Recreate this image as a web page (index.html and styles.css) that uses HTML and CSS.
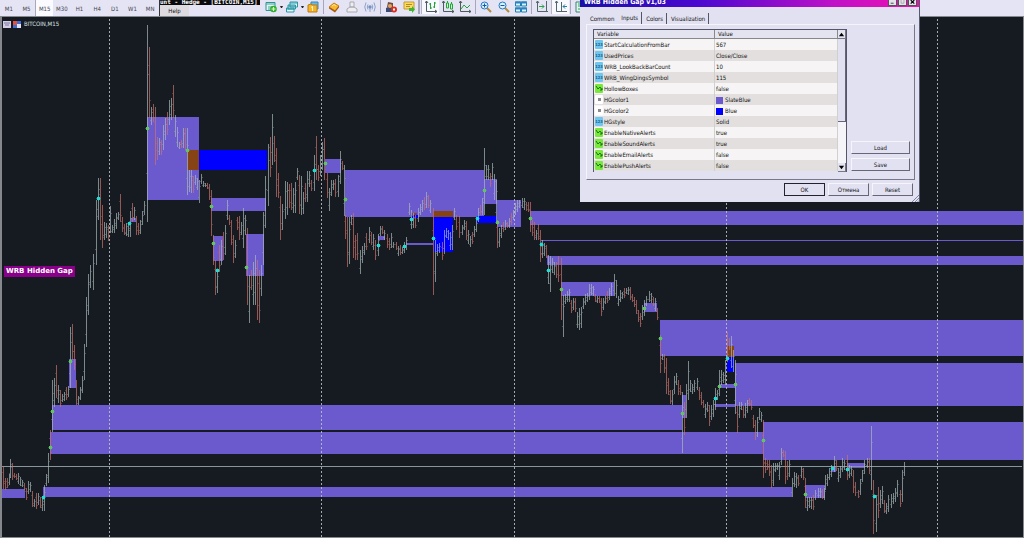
FILE: index.html
```html
<!DOCTYPE html>
<html lang="en">
<head>
<meta charset="utf-8">
<meta name="viewport" content="width=device-width, initial-scale=1">
<title>BITCOIN,M15</title>
<link rel="stylesheet" href="styles.css">
</head>
<body>
<div class="terminal">
  <header class="topbar">
    <nav class="frames" aria-label="Timeframes">
      <button>M1</button><button>M5</button><button class="active">M15</button><button>M30</button><button>H1</button><button>H4</button><button>D1</button><button>W1</button><button>MN</button>
    </nav>
    <div class="menu">
      <div class="caption"><span>unt - Hedge - [BITCOIN,M15]</span></div>
      <button class="help">Help</button>
    </div>
    <div class="tools">
      <button class="tool" aria-label="New chart"><svg viewBox="0 0 12 12"><path d="M1 1.500h9v8H1z" fill="#e4f3ee" stroke="#2c9494"/><path d="M1 3h9M3 6h5M3 8h3" stroke="#41a7a0"/><circle cx="8.500" cy="8" r="3.300" fill="#2fae2f"/><path d="M6.500 8h4M8.500 6v4" stroke="#d8ffbf" stroke-width="1.200"/></svg></button><i class="drop"></i>
      <button class="tool" aria-label="Profiles"><svg viewBox="0 0 12 12" fill="#eaf8fa" stroke="#2897a6"><path d="M4 1h7.500v5H4zM2 4h7.500v4H2zM.500 7H8v4H.500z"/><path d="M4 2h7M2 5h7M1 8h7"/></svg></button><i class="drop"></i>
      <button class="tool" aria-label="Market watch"><svg viewBox="0 0 12 12"><path d="M4 1h7v7H4z" fill="#68b8e8" stroke="#3a87b8"/><path d="M1 4l3-1 1 1h5v7H1z" fill="#f5b52a" stroke="#c17c08"/><path d="M5.500 5v5M4 6.500l1.500-1" stroke="#fff2c0"/></svg></button>
      <i class="sep"></i>
      <button class="tool" aria-label="Editor"><svg viewBox="0 0 12 12"><path d="M1 6l5-4 5 3-4 5z" fill="#f7b92f" stroke="#c9800e"/><path d="M1 6v1.500l6 4 4-5V5L7 9.500z" fill="#a85a16"/><path d="M4 5l2-1.500 2 1.500" stroke="#ffe89b" fill="none"/></svg></button>
      <button class="tool" aria-label="Community"><svg viewBox="0 0 12 12" fill="#eeeef0" stroke="#a8a9b0"><path d="M4 1h4v5H4zM1 11V8l3-2h4l3 2v3z"/></svg></button>
      <button class="tool" aria-label="Signals"><svg viewBox="0 0 12 12" fill="none" stroke="#8ba2c8"><circle cx="6" cy="6" r="1.300" fill="#4d7cc0"/><path d="M4 3.500Q2.500 6 4 8.500M8 3.500Q9.500 6 8 8.500M2 1.500Q-.500 6 2 10.500M10 1.500Q12.500 6 10 10.500M6 7v4"/></svg></button>
      <i class="sep"></i>
      <button class="tool" aria-label="Auto trading"><svg viewBox="0 0 12 12"><path d="M2 6l1-5 5 1v5z" fill="#715038"/><path d="M1 11V7l4-2 4 3v3z" fill="#3b4b72"/><circle cx="5" cy="5" r="2" fill="#e5a366"/><circle cx="9" cy="8.500" r="3" fill="#dc2c1c"/><path d="M8 7.500h2v2H8z" fill="#fff"/></svg></button>
      <button class="tool slim" aria-label="New order"><svg viewBox="0 0 12 12"><path d="M1 1h10v7H1z" fill="#fbda62" stroke="#c39b2c"/><path d="M3 3.500h6M3 5.500h4" stroke="#b58a20"/><path d="M6 7h3V5l3 3.500L9 12v-2H6z" fill="#41b52d"/></svg></button>
      <i class="sep wide"></i>
      <button class="tool active" aria-label="Bar chart"><svg viewBox="0 0 12 12" fill="none" stroke="#4d5c5b"><path d="M1.500 0v10.500H12M0 2l1.500-2L3 2M10 9l2 1.500L10 12"/><path d="M5.500 2v6M4 3h1.500M5.500 7H7M9.500 1v6M8 6h1.500M9.500 2H11" stroke="#24a53a"/></svg></button>
      <button class="tool slim" aria-label="Candlesticks"><svg viewBox="0 0 12 12" fill="none" stroke="#4d5c5b"><path d="M1.500 0v10.500H12M0 2l1.500-2L3 2M10 9l2 1.500L10 12"/><path d="M4.500 2h2v5h-2zM8.500 3h2v5h-2zM5.500 0v2M9.500 1v2" fill="#c5ffc6" stroke="#24a53a"/></svg></button>
      <button class="tool" aria-label="Line chart"><svg viewBox="0 0 12 12" fill="none" stroke="#4d5c5b"><path d="M1.500 0v10.500H12M0 2l1.500-2L3 2M10 9l2 1.500L10 12"/><path d="M2 8l3-4 3 3 3-3" stroke="#24a53a"/></svg></button>
      <i class="sep"></i>
      <button class="tool" aria-label="Zoom in"><svg viewBox="0 0 12 12" fill="none"><path d="M7 7l4 4" stroke="#b28a38" stroke-width="2"/><circle cx="4.500" cy="4.500" r="3.500" fill="#dceffc" stroke="#2479c9"/><path d="M2.500 4.500h4M4.500 2.500v4" stroke="#145ba6"/></svg></button>
      <button class="tool slim" aria-label="Zoom out"><svg viewBox="0 0 12 12" fill="none"><path d="M7 7l4 4" stroke="#b28a38" stroke-width="2"/><circle cx="4.500" cy="4.500" r="3.500" fill="#dceffc" stroke="#2479c9"/><path d="M2.500 4.500h4" stroke="#145ba6"/></svg></button>
      <button class="tool" aria-label="Tile windows"><svg viewBox="0 0 12 12"><path d="M.500 1h5v4h-5zM6.500 1h5v4h-5zM.500 7h5v4h-5zM6.500 7h5v4h-5z" fill="#d8f2ff" stroke="#207fae"/><path d="M0 1.500h12M0 7.500h12" stroke="#2a83c0" stroke-width="2"/></svg></button>
      <i class="sep"></i>
      <button class="tool" aria-label="Auto scroll"><svg viewBox="0 0 12 12" fill="none" stroke="#526568"><path d="M1.500 0v10.500H12M10.500 0v11M0 2l1.500-2L3 2"/><path d="M3 5.500h5M6 3.500l2 2-2 2" stroke="#2ba148"/></svg></button>
      <button class="tool active" aria-label="Chart shift"><svg viewBox="0 0 12 12" fill="none" stroke="#526568"><path d="M1.500 0v10.500H12M6.500 1v10M0 2l1.500-2L3 2"/><path d="M12 5.500H8M10 3.500l-2 2 2 2" stroke="#297fa0"/></svg></button>
      <i class="sep"></i>
      <button class="tool" aria-label="Indicators"><svg viewBox="0 0 12 12"><path d="M1 1h10v10H1z" fill="#dff5e8" stroke="#3c817e"/><path d="M3 3h4M3 5h5M3 8h4" stroke="#2e9c5b"/></svg></button>
    </div>
  </header>
  <main class="chart">
    <svg class="plot" id="plot" viewBox="0 16 1024 522" preserveAspectRatio="none" role="img" aria-label="BITCOIN M15 price bars"></svg>
    <div class="symbol">
      <svg viewBox="0 0 18 7"><path d="M0 0h8v7H0z" fill="#d5cde4"/><path d="M1 2h6M2 4h4" stroke="#7e76a4"/><path d="M10 0h8v7h-8z" fill="#3d6fd8"/><path d="M10 0h4v4h-4z" fill="#e8503c"/><path d="M14 3h4v4h-4z" fill="#e0e4f4"/></svg>
      <span>BITCOIN,M15</span>
    </div>
    <div class="badge">WRB Hidden Gap</div>
  </main>
  <section class="dialog" aria-label="WRB Hidden Gap v1,03">
    <div class="title"><span>WRB Hidden Gap v1,03</span>
      <div class="winbtns"><button aria-label="Minimize"><svg viewBox="0 0 9 7"><path d="M2 4.500h4" stroke="#111"/></svg></button><button aria-label="Maximize"><svg viewBox="0 0 9 7"><path d="M2.500 0v4.500h4V0" fill="none" stroke="#999"/></svg></button><button aria-label="Close"><svg viewBox="0 0 9 7"><path d="M2 0l5 5M7 0L2 5" stroke="#000" stroke-width="1.500"/></svg></button></div>
    </div>
    <div class="tabs"><button>Common</button><button class="on">Inputs</button><button>Colors</button><button>Visualization</button></div>
    <div class="panel">
      <div class="grid">
        <table>
          <thead><tr><th>Variable</th><th>Value</th></tr></thead>
          <tbody>
            <tr><td><i class="ty num">123</i>StartCalculationFromBar</td><td>567</td></tr>
            <tr><td><i class="ty num">123</i>UsedPrices</td><td>Close/Close</td></tr>
            <tr><td><i class="ty num">123</i>WRB_LookBackBarCount</td><td>10</td></tr>
            <tr><td><i class="ty num">123</i>WRB_WingDingsSymbol</td><td>115</td></tr>
            <tr><td><i class="ty bool"><svg viewBox="0 0 8 8"><path d="M1 2l2 3 2-2 2 3M5 6h2V4" fill="none" stroke="#15780f"/></svg></i>HollowBoxes</td><td>false</td></tr>
            <tr><td><i class="ty col"></i>HGcolor1</td><td><i class="swatch slate"></i>SlateBlue</td></tr>
            <tr><td><i class="ty col"></i>HGcolor2</td><td><i class="swatch blue"></i>Blue</td></tr>
            <tr><td><i class="ty num">123</i>HGstyle</td><td>Solid</td></tr>
            <tr><td><i class="ty bool"><svg viewBox="0 0 8 8"><path d="M1 2l2 3 2-2 2 3M5 6h2V4" fill="none" stroke="#15780f"/></svg></i>EnableNativeAlerts</td><td>true</td></tr>
            <tr><td><i class="ty bool"><svg viewBox="0 0 8 8"><path d="M1 2l2 3 2-2 2 3M5 6h2V4" fill="none" stroke="#15780f"/></svg></i>EnableSoundAlerts</td><td>true</td></tr>
            <tr><td><i class="ty bool"><svg viewBox="0 0 8 8"><path d="M1 2l2 3 2-2 2 3M5 6h2V4" fill="none" stroke="#15780f"/></svg></i>EnableEmailAlerts</td><td>false</td></tr>
            <tr><td><i class="ty bool"><svg viewBox="0 0 8 8"><path d="M1 2l2 3 2-2 2 3M5 6h2V4" fill="none" stroke="#15780f"/></svg></i>EnablePushAlerts</td><td>false</td></tr>
          </tbody>
        </table>
        <div class="scroll"><button aria-label="Scroll up"><svg viewBox="0 0 8 8"><path d="M1 6h6L4 2z"/></svg></button><div class="thumb"></div><button class="down" aria-label="Scroll down"><svg viewBox="0 0 8 8"><path d="M1 2h6L4 6z"/></svg></button></div>
      </div>
      <div class="side"><button class="btn">Load</button><button class="btn">Save</button></div>
    </div>
    <div class="foot"><button class="btn ok">OK</button><button class="btn">Отмена</button><button class="btn">Reset</button></div>
    <svg class="grip" viewBox="0 0 7 7"><path d="M0 7l7-7M3 7l4-4M5.500 7L7 5.500" stroke="#8185a4" fill="none"/></svg>
  </section>
</div>
<script src="chart.js"></script>
</body>
</html>
```
FILE: styles.css
```css
* { box-sizing: border-box; }
body { margin: 0; background: #161b21; font-family: "DejaVu Sans Condensed", "DejaVu Sans", sans-serif; font-size: 6px; color: #111; }
button { margin: 0; padding: 0; border: 0; background: none; font: inherit; color: inherit; }
.terminal { position: relative; display: flex; flex-direction: column; height: 100vh; overflow: hidden; }
.topbar { display: flex; height: 17px; flex: none; background: #e4e4f4; }
.frames { display: grid; grid-template-columns: repeat(9, 1fr); width: 159px; flex: none; color: #44444c; }
.frames button { height: 16px; white-space: nowrap; }
.frames .active { background: #fafaff; border: 1px solid #a8a8b8; border-width: 0 0 0 1px; }
.menu { width: 101px; flex: none; display: flex; flex-direction: column; align-items: flex-start; border-left: 1px solid #33333b; }
.caption { height: 5px; width: 100%; overflow: hidden; background: #0a0a0c; color: #fff; font: bold 6px/7px "DejaVu Sans Mono", monospace; white-space: nowrap; display: flex; align-items: flex-end; }
.help { background: #dddbe0; width: 29px; height: 11px; }
.tools { flex: 1; display: flex; align-items: center; padding-left: 2px; padding-bottom: 3px; }
.tool { width: 18px; height: 14px; display: flex; align-items: center; justify-content: center; flex: none; }
.tool.slim { width: 17px; }
.tool.active { background: #f8f8ff; border-left: 1px solid #b5b5c6; }
.tool svg { width: 12px; height: 12px; display: block; }
.drop { width: 3px; flex: none; border: 1px solid transparent; border-top: 2px solid #222; }
.sep { width: 1px; height: 14px; margin: 0 1px; background: #a7a7bb; flex: none; }
.sep.wide { width: 2px; }
.chart { position: relative; flex: 1; min-height: 0; border: 1px solid #85888c; border-left-width: 2px; margin-top: -1px; }
.plot { position: absolute; inset: -1px -1px -1px -2px; width: calc(100% + 3px); height: calc(100% + 2px); display: block; z-index: -1; shape-rendering: crispEdges; }
.symbol { position: absolute; left: 1px; top: 3px; display: flex; align-items: center; gap: 3px; color: #dfe3e6; line-height: 8px; }
.symbol svg { width: 18px; height: 7px; }
.badge { position: absolute; left: 2px; top: 249px; padding: 0 2px; background: #8b008b; color: #fff; font: bold 7px/11px "DejaVu Sans", sans-serif; white-space: nowrap; }

.dialog { position: absolute; left: 580px; top: 0; width: 340px; height: 202px; background: #e1e1f1; border-right: 1px solid #555a70; display: flex; flex-direction: column; }
.title { height: 7px; display: flex; justify-content: space-between; align-items: flex-end; overflow: hidden; background: linear-gradient(90deg, #1a10a8, #4a08d0 35%, #c010c8 75%, #f010b0); color: #fff; font: bold 7px/9px "DejaVu Sans Condensed", sans-serif; padding: 0 2px 0 4px; flex: none; }
.winbtns { display: flex; gap: 1px; align-self: flex-start; }
.winbtns button { width: 9px; height: 6px; background: #e4e2ec; border: 1px solid #555; border-top: 0; }
.winbtns svg { display: block; width: 7px; height: 5px; }
.tabs { display: flex; align-items: flex-end; height: 17px; padding-left: 6px; flex: none; }
.tabs button { height: 11px; padding: 0 3px 0 4px; border-right: 1px solid #555566; }
.tabs button:first-child { border: 0; }
.tabs .on { height: 12px; padding-bottom: 2px; }
.panel { margin: 0 4px 0 6px; padding: 4px 4px 7px 6px; border: 1px solid #77778c; border-top-color: #f4f4fa; border-left-color: #f4f4fa; display: flex; gap: 4px; height: 156px; flex: none; }
.grid { display: flex; width: 254px; height: 143px; overflow: hidden; border: 1px solid #55556a; border-bottom: 0; }
table { border-collapse: separate; border-spacing: 0; table-layout: fixed; flex: 1; align-self: flex-start; }
th { height: 9px; padding: 0 3px; line-height: 8px; text-align: left; font-weight: normal; background: #e4e4f0; border-right: 1px solid #888; border-bottom: 1px solid #888; }
th:first-child { width: 121px; }
td { height: 11px; padding: 0 1px; line-height: 9px; border-right: 1px solid #d2d0ce; white-space: nowrap; }
tr:nth-child(odd) td { background: #f6f4f4; }
tr:nth-child(even) td { background: #e2dfde; }
.ty { display: inline-block; vertical-align: middle; width: 8px; height: 9px; margin-right: 1px; overflow: hidden; font: bold 4px/9px "DejaVu Sans Condensed", sans-serif; text-align: center; border-radius: 1px; }
.num { background: #6fc6ee; color: #176291; }
.bool { background: #78e83a; }
.bool svg { display: block; width: 8px; height: 8px; }
.col { background: linear-gradient(#8c8c90, #8c8c90) center / 3px 3px no-repeat #fff; }
.swatch { display: inline-block; vertical-align: middle; width: 7px; height: 7px; margin-right: 2px; }
.slate { background: #6a5acd; }
.blue { background: #00f; }
.scroll { width: 8px; display: flex; flex-direction: column; background: #f5f4f8; }
.scroll button { width: 8px; height: 9px; background: #e4e4f0; border: 1px solid #777788; border-top: 0; border-left: 0; }
.scroll svg { display: block; width: 7px; height: 7px; }
.thumb { height: 83px; background: #e1e1f1; border: 1px solid #666678; border-top: 0; border-left: 0; }
.scroll .down { margin-top: auto; }
.side { flex: 1; display: flex; flex-direction: column; justify-content: flex-end; gap: 4px; padding-bottom: 1px; }
.btn { height: 13px; border: 1px solid #666678; border-top-color: #f5f5fb; border-left-color: #f5f5fb; }
.foot { display: flex; justify-content: flex-end; gap: 3px; padding: 3px 6px 0 0; }
.foot .btn { width: 41px; }
.foot .ok { border: 1px solid #222230; }
.grip { position: absolute; right: 0; bottom: 0; width: 7px; height: 7px; }
```
FILE: chart.js
```js
const SVG_NS = "http://www.w3.org/2000/svg";
const plot = document.getElementById("plot");
const SLATE = "#6a5acd", BLUE = "#0000ff", BROWN = "#864313";

function rect(x, y, w, h, fill, opacity = 1) {
  const el = document.createElementNS(SVG_NS, "rect");
  Object.entries({ x, y, width: w, height: h, fill, opacity }).forEach(([k, v]) => el.setAttribute(k, v));
  plot.appendChild(el);
}

// Gap zones: left, top, right, bottom
const slate = [
  [147,117,199,200],[211,198,266,211],[213,236,223,261],[246,234,264,276],[325,159,341,173],
  [345,170,484,217],[484,179,497,204],[497,200,521,227],[378,236,385,240],[406,243,433,245],
  [530,211,1024,225],[541,240,1024,241],[547,256,1024,265],[561,282,614,296],[644,303,657,312],
  [660,320,1024,356],[735,363,1024,406],[763,422,1024,460],[52,405,682,430],[50,432,763,454],
  [43,487,792,497],[2,489,25,498],[69,359,76,388],[682,395,686,418],[719,384,735,388],
  [715,404,735,407],[805,485,825,498],[847,463,865,468],[831,466,836,472],[131,218,136,222]
];
const blue = [[199,150,267,170],[477,216,497,223],[433,217,453,252],[411,215,418,218],[727,357,734,372]];
const brown = [[187,150,199,170],[433,211,453,217],[411,213,417,215],[727,346,734,357]];

// Price bars: x,high,low; a trailing r marks a falling bar
const bars = `3,466,489r 5,478,490r 7,478,488r 9,474,485 10,459,478 12,463,480r 14,473,478r 16,474,480r 18,473,484 20,477,486 22,480,487 24,483,490r 26,488,500r 28,481,494 30,482,492 32,491,507r 34,499,507 36,493,509r 38,493,505 40,497,508r 42,497,511 44,485,511 46,474,486 48,453,483 50,430,460r 52,380,432 54,378,407 56,365,398r 58,385,403 60,390,407r 62,394,402 64,392,401 66,387,400r 68,386,397 70,327,388 72,324,360r 74,345,370r 76,380,405r 78,396,405 80,387,400 82,376,393 84,344,380 86,297,347 88,274,315 90,265,288 93,254,290
96,200,265 98,178,220 100,178,240r 102,205,248r 104,222,240 106,223,238 108,225,241r 110,206,233 112,225,233 114,219,233 116,213,229 118,212,220 120,194,222r 122,217,232r 124,224,235r 126,223,236 128,225,237 130,211,237 132,203,222r 134,207,220 136,216,235r 138,223,235r 140,220,234 142,211,225 144,201,215 147,25,222
149,47,118r 151,107,125 153,104,122r 155,107,165r 157,137,160r 159,138,155 161,140,155r 163,125,150 165,118,140 167,112,135r 169,100,125 171,98,120 173,85,118r 175,115,137 177,127,147 179,142,149 181,140,148r 183,128,148 185,128,150r 187,128,195 189,170,192 191,170,193 193,176,193r 195,175,185 197,178,190 199,180,203 201,174,184 203,181,187 205,183,187 207,183,189r 209,184,200r 211,190,236r 213,235,265r 215,260,295r 217,270,293 219,245,272r 221,240,265 223,232,260r 225,225,255 227,200,220 229,215,225r 231,220,245r 233,235,263r 235,240,258 237,217,230r 239,216,240r 241,222,235 243,208,248 245,215,235 247,228,305r 249,275,323 251,270,290r 253,262,305 255,255,305 257,260,320r 259,270,323r 261,265,296 263,212,265 265,176,228
268,144,206 270,137,177r 272,114,165 274,136,162r 276,148,197r 278,173,198r 280,196,240r 282,204,230 285,181,219 287,182,215 289,184,208r 291,183,210r 293,188,213 295,182,213 297,168,180 299,175,214r 301,176,215 303,192,214 305,183,202r 307,171,202 309,171,187 311,180,191r 314,155,191 316,136,180r 318,165,181r 320,155,176 322,142,170 324,138,180r 327,173,198r 329,188,211 331,180,196 333,180,190 335,179,197r 338,175,197 340,151,184 342,161,170r 344,165,216 345,215,239r 347,217,267r 349,217,264 351,215,225 353,213,258r 355,235,260r 357,233,260r 360,250,274 362,246,263 364,243,255 366,233,250r 369,227,243 371,232,245r 373,234,250 375,240,260r 378,234,256 380,226,236 382,226,234r 384,230,240 387,234,248r 389,238,250r 391,233,248 393,242,248 396,242,250r 398,246,256 400,245,255r 402,247,254 404,242,253 406,237,250
409,203,215 411,210,229 413,213,228 415,215,228r 418,208,222 420,204,215 422,200,212 424,197,210r 426,192,208 428,195,208r 430,200,213 433,208,295r 435,240,282 437,244,256 439,243,253 442,242,260r 444,230,254 446,228,238 448,230,240 450,232,250 452,225,250 454,208,220 456,215,230r 459,216,238r 462,225,235 464,220,230 466,221,240r 468,230,244 470,236,247 472,232,244r 474,226,237 476,220,232 478,208,222 480,205,215r 482,198,215 484,148,215 486,165,180 488,165,180 490,173,187r 492,163,180 494,174,200 496,180,223 497,220,248r 499,228,247 501,225,238 503,222,232r 505,220,230 507,222,228r 509,218,228 511,213,225r 513,210,220 515,203,215 517,200,212 519,200,208 522,198,208 524,198,210 526,202,211r 528,202,212r 530,202,232r 532,220,236r 534,222,240r 536,230,240 538,224,240r 540,230,262r 542,240,258 544,243,256 546,245,258r 548,255,284 550,256,292 552,258,273 554,262,275 556,262,278r 558,256,282r 561,258,320r 563,295,337
565,294,304 567,291,302 569,289,302 571,300,313r 573,298,310 575,298,312r 577,312,328 579,308,330 581,307,328 583,298,309 585,294,305 587,293,302 589,284,300 591,284,295 593,286,296 595,294,302r 597,296,303 599,296,303r 601,298,316r 603,298,310 605,296,304 607,291,303r 609,288,300 611,283,296 614,274,296 616,280,298 618,296,306 620,290,302 622,292,299 624,288,298r 626,288,294 628,287,295 630,287,300r 632,294,302r 634,297,307r 636,300,314r 638,310,322r 640,313,327r 642,305,320 644,300,316 646,296,306 649,291,302 651,293,303 653,297,306r 655,298,311 657,308,320r 660,335,373r 662,354,360 664,354,373r 666,358,394r 668,378,395r 670,390,404r 672,390,405 674,376,394 676,373,385 678,380,395r 680,385,395r 682,392,453 684,402,435r 686,384,418 688,361,400 690,380,392 692,384,394 694,380,392 697,378,390 699,387,400r 701,392,405r 703,400,408r 705,404,418 707,402,412 709,405,426r 711,405,420 713,400,417 715,388,410 717,390,400 719,370,396 721,370,385 723,372,383 725,360,385 727,332,362r 729,338,350r 731,336,368 733,350,372 735,360,414
737,405,433r 739,402,418 741,402,410 743,406,418r 745,403,418 747,400,413 749,398,406r 751,400,410r 753,415,428r 755,420,440r 757,417,437 759,408,420 761,412,422 763,420,478r 765,458,473r 767,460,470r 769,460,476r 771,465,488r 773,463,486 775,463,472 777,463,470 779,462,480 781,448,465 783,450,457r 785,451,484r 787,461,480r 789,460,477 792,478,497 794,472,487 796,473,488 798,475,486r 801,466,478 803,468,480r 805,478,508r 807,497,511 809,497,508 811,497,509 813,495,510r 815,490,500 818,488,498 820,488,498 822,489,499r 824,488,500 825,475,490 827,474,486 829,468,480 831,465,477 834,456,472 836,460,471r 838,468,482 840,466,478 842,458,472 844,460,470 847,455,480r 849,465,478 851,466,476 853,470,493r 855,482,496r 858,490,498r 860,479,495 862,470,482 864,460,474 867,458,468 869,458,474r 871,426,490 873,480,534r 876,495,532 878,487,518r 880,490,508 882,486,504 884,500,513r 886,503,514 888,495,512 891,494,508 893,493,504 895,488,502 897,480,497 900,490,507r 902,470,502 904,462,476`;

const green = [[147,128],[187,150],[211,206],[213,243],[246,267],[325,163],[345,199],[484,190],[497,222],[530,218],[561,289],[644,308],[660,338],[50,447],[52,411],[70,361],[763,440],[719,386],[735,384],[682,413],[805,494]];
const cyan = [[43,497],[98,198],[129,223],[217,270],[314,170],[378,245],[404,246],[411,219],[433,238],[477,218],[541,244],[548,270],[715,398],[727,358],[832,468],[847,469],[874,496]];

slate.forEach(([l, t, r, b]) => rect(l, t, r - l, b - t, SLATE));
blue.forEach(([l, t, r, b]) => rect(l, t, r - l, b - t, BLUE));
brown.forEach(([l, t, r, b]) => rect(l, t, r - l, b - t, BROWN));

[109, 321, 514, 726, 937].forEach(x => {
  for (let y = 19; y < 537; y += 4) rect(x, y, 1, 2, "#bdc3c7", 0.85);
});
rect(2, 466, 1020, 1, "#87959d");

bars.split(/\s+/).forEach(item => {
  const falling = item.endsWith("r");
  const [x, high, low] = item.split(",").map(v => parseInt(v, 10));
  const color = falling ? "#c9726b" : "#a9b7b9";
  const step = Math.max(2, Math.round((low - high) / 4));
  rect(x, high, 1, low - high, color, 0.7);
  rect(x - 1, falling ? high + step : low - step, 1, 1, color, 0.35);
  rect(x + 1, falling ? low - step : high + step, 1, 1, color, 0.35);
});
const dot = (x, y, fill) => {
  rect(x - 1, y - 1, 3, 3, fill);
  rect(x - 2, y, 5, 1, fill, 0.4);
  rect(x, y - 2, 1, 5, fill, 0.4);
};
green.forEach(([x, y]) => dot(x, y, "#62c462"));
cyan.forEach(([x, y]) => dot(x, y, "#22dcd2"));
```
